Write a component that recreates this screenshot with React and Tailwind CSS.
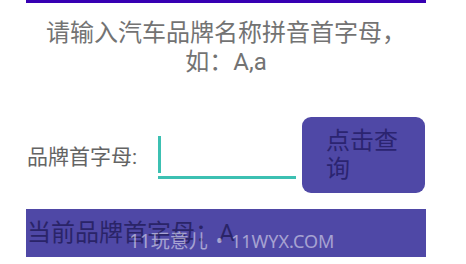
export default function App() {
  return (
    <div className="relative h-[264px] w-[466px] overflow-hidden bg-white font-['Roboto','Noto_Sans_CJK_SC',sans-serif]">
      <div className="ml-[26px] w-[400px]">
        {/* top bar */}
        <div className="h-[3px] bg-[#3700b3]" />

        {/* heading */}
        <p className="mt-[16px] text-center text-[24px] leading-[29px] text-[#737373]">
          请输入汽车品牌名称拼音首字母，
          <br />
          如：A,a
        </p>

        {/* input row */}
        <div className="mt-[40px] flex h-[76px] items-center">
          <span className="mt-[4px] ml-px w-[131px] text-[21px] leading-[24px] text-[#646464]">
            品牌首字母:
          </span>
          <div className="mt-[5px] flex w-[138px] flex-col">
            <div className="h-[37px] w-[2.5px] bg-[#3cc0b2]" />
            <div className="mt-[3px] h-[3px] bg-[#3cc0b2]" />
          </div>
          <button className="ml-[6px] h-[76px] w-[123px] rounded-[9px] bg-[#4f48a6] px-[24px] text-left text-[24px] leading-[28px] text-[#2b2470]">
            点击查询
          </button>
        </div>

        {/* result bar */}
        <div className="mt-[16px] flex h-[48px] items-center bg-[#4f48a6] pl-px text-[24px] text-[#2a2468]">
          当前品牌首字母：A
        </div>
      </div>

      {/* watermark */}
      <div className="absolute left-[129px] top-[229px] flex items-center font-['Noto_Sans','Noto_Sans_CJK_SC',sans-serif] text-[19px] leading-[24px] text-white/50">
        <span>11玩意儿</span>
        <span className="mx-[8px]">•</span>
        <span className="text-[18px]">11WYX.COM</span>
      </div>
    </div>
  );
}
